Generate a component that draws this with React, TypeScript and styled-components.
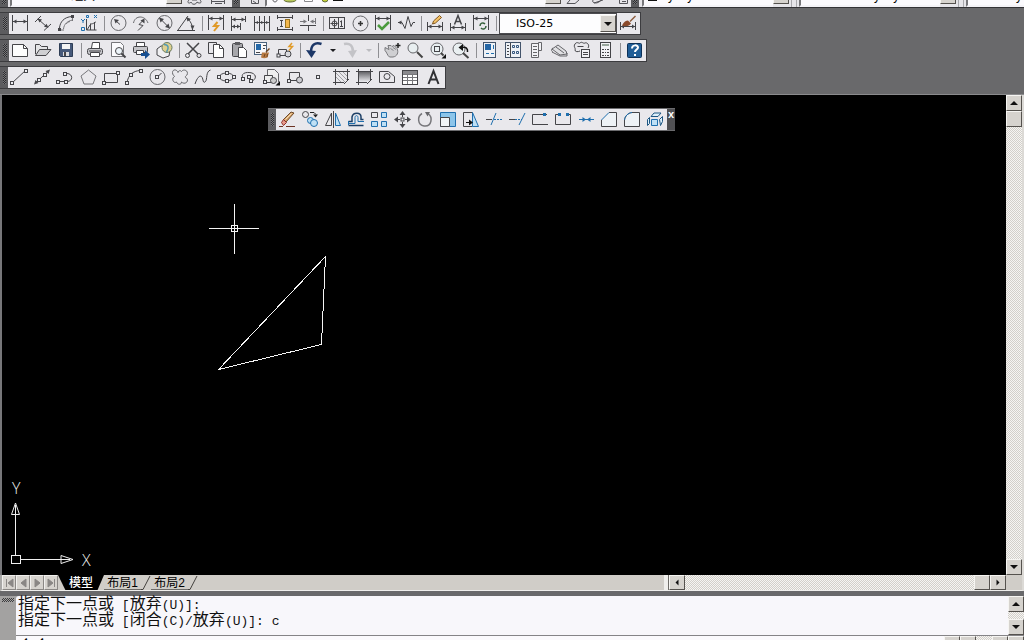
import React from 'react';
import styled, { createGlobalStyle, css } from 'styled-components';

const INK = '#454549';
const BLUE = '#1f6fae';
const PALE = '#bfe0f5';
const ORANGE = '#e09a28';
const UI_FONT = '"Liberation Sans", "Noto Sans CJK SC", sans-serif';

const GlobalStyle = createGlobalStyle`
  *, *::before, *::after { box-sizing: border-box; }
  html, body, #root { height: 100%; }
  body { margin: 0; background: #69696b; font-family: ${UI_FONT}; font-size: 12px; overflow: hidden; }
  button, input, select { font: inherit; color: inherit; margin: 0; padding: 0; }
`;

/* ---------- drawing icons ---------- */

type Art = React.ReactNode;
const F = (d: string, fill = INK) => <path d={d} fill={fill} stroke="none" />;
const P = (d: string, stroke = INK, fill = 'none', w = 1) => <path d={d} stroke={stroke} fill={fill} strokeWidth={w} />;
const D = (x: number, y: number, fill = '#eeeef2', stroke = INK) => (
  <rect x={x - 0.5} y={y - 0.5} width="3" height="3" fill={fill} stroke={stroke} />
);

const art: Record<string, Art> = {
  linear: <>{P('M3.500 2v16M18.500 2v16M4 8.500h14')}{F('M4 8.500l3.500-2v4zM18 8.500l-3.500-2v4z')}</>,
  aligned: <>{P('M3 9l6-6M12 17.500l7-6.500M6 6l9 8')}{F('M5.500 5.500l4.500 1-2.500 3zM16.500 14.800l-4.500-1 2.500-3z')}</>,
  arclen: <>{P('M4.500 15C5 9 9 4 17 3.500')}{P('M8.500 16c.5-5 4-8 9-9', '#77777b')}{P('M6 17h3M17.500 5v3', '#77777b')}{F('M3 15h3v3h-3zM16 2h3v3h-3z')}{P('M11 11c1-1 2-2 4-2.500', '#77777b')}</>,
  ordinate: <>{P('M8.500 6v11h10M9 17l3-5M12 11c4 0 5-2 6-2M16.500 9v8M12.500 11v6')}{P('M3 6l2 2 2-2M5 8v2M16 2l3 3M19 2l-3 3M3.500 14.500h3v3h-3zM8.500 2.500h2v2h-2z', BLUE)}</>,
  radius: <><circle cx="11.500" cy="10" r="7.500" stroke="#68686c" />{P('M13 11.500L9 8')}{F('M7 6l5 1-3.500 3.500z')}</>,
  jogged: <>{P('M3.500 10C5 2 15 2 18 10', '#68686c')}{P('M8 17.500l5-5-4-1 4-4')}{F('M14.500 5.500v5l-4-3z')}</>,
  diameter: <><circle cx="11.500" cy="10" r="7.500" stroke="#68686c" />{P('M7 5.500l9 9')}{F('M6 4.500l5 1.500-3.500 3.500zM17 15.500l-5-1.500 3.500-3.500z')}</>,
  angular: <>{P('M1 17.500h18M2 17L12 3M12 6c3 3 4.500 6 4.500 11')}{F('M10 4l5 2-3.500 2.500zM16.500 17l-2-4.500h4z')}</>,
  quick: <>{P('M3.500 2v15M18.500 2v15M4 5.500h14')}{F('M4 5.500l3.500-2v4zM18 5.500l-3.500-2v4z')}{P('M12.500 9l-3.500 4h4l-4 5', ORANGE, 'none', 2)}</>,
  baseline: <>{P('M3.500 3v15M18 6.500H4M12.500 10v7M4 13.500h8M17.500 3v6')}{F('M4 6.500l3.500-2v4zM17 6.500l-3.500-2v4zM4 13.500l3-2v4zM12 13.500l-3-2v4z')}</>,
  continued: <>{P('M3.500 3v15M8.500 3v15M13.500 3v15M18.500 3v15M4 9.500h14')}{F('M4 9.500l3-1.500v3zM13 9.500l-3-1.500v3zM18 9.500l-3-1.500v3z')}</>,
  dimspace: <>{P('M3.500 2v4M18.500 2v4M4 4.500h14M3.500 14v4M18.500 14v4M4 16.500h14M7.500 7v7M6 7.500h3M6 13.500h3')}<rect x="11.500" y="6.500" width="4" height="8" fill="#f3b74c" stroke="#9a7420" /></>,
  dimbreak: <>{P('M11.500 2v6M11.500 12v6M3 12.500h16')}{P('M3 8.500h6M14 8.500h5M18.500 5v6', '#77777b')}{F('M10 8.500l-3.500-2v4zM13 8.500l3.500-2v4z', '#77777b')}</>,
  tolerance: <><rect x="3.500" y="4.500" width="15" height="11" />{P('M12.500 5v10M4.500 10.500h7M8.500 6v9M15.500 8v5M14 9l2-1.500M14 13.500h3')}<circle cx="8.500" cy="10.500" r="2.500" /></>,
  centermark: <><circle cx="11.500" cy="10.500" r="7.500" stroke="#68686c" />{P('M9 10.500h5M11.500 8v5', '#333', 'none', 1.5)}</>,
  inspect: <>{P('M3.500 2v15M18.500 2v15M4 5.500h14')}{F('M4 5.500l3.500-2v4zM18 5.500l-3.500-2v4z')}{P('M6 12l4 4 7-7', '#4b9b3d', 'none', 2.5)}</>,
  jogline: <>{P('M3 9.500h4l3 6 3-12 3 10 2-4h2')}{F('M3 9.500l3.500-2v4z')}</>,
  dimedit: <>{P('M3.500 9v9M18.500 9v9M4 13.500h14')}{F('M4 13.500l3.500-2v4zM18 13.500l-3.500-2v4z')}{P('M8.500 11l1-3 6-5.500 2 2-6 5.500z', '#80551d', '#f5c265')}</>,
  dimtext: <>{P('M3.500 10v8M18.500 10v8M4 14.500h14')}{F('M4 14.500l3.500-2v4zM18 14.500l-3.500-2v4z')}{P('M7.500 11.500l3.500-9 3.500 9M9 8.500h4', INK, 'none', 1.5)}</>,
  dimupdate: <>{P('M3.500 2v15M18.500 2v15M4 5.500h14')}{F('M4 5.500l3.500-2v4zM18 5.500l-3.500-2v4z')}{P('M10 13c0-3 3-4 5-2M16 13c0 3-3 4-5 2', '#35603a', 'none', 1.5)}</>,
  dimstyle: <>{P('M3.500 9v8M18.500 9v8M4 13.500h14')}{F('M4 13.500l3-2v4zM18 13.500l-3-2v4z')}{F('M5 12.500c2-4 4-5 6-5l3 3c-2 3-5 3-9 2z', '#8b4a2b')}{P('M13 8.500l5.500-5.500', '#8b5a3c', 'none', 1.5)}</>,

  new: <>{P('M3.500 4.500h11l4 4v8h-15z', INK, '#fdfdfd')}{P('M14.500 4.500v4h4')}</>,
  open: <>{P('M3.500 14V4.500h4l2 2h6v3', INK, '#e4e4e6')}{P('M3.500 15.500l4-6h11.500l-5 6z', INK, '#cfcfd2')}</>,
  save: <>{P('M4.500 3.500h13v13h-12l-1-1z', '#2e3d55', '#46597a')}<rect x="7" y="4" width="8" height="5" fill="#f4f4f4" stroke="none" /><rect x="8" y="12" width="6" height="4" fill="#dcdce0" stroke="none" />{F('M9 12h2v4h-2z')}</>,
  print: <>{P('M7.500 8l1-5.500h7V8', INK, '#fff')}<rect x="3.500" y="8.500" width="15" height="6" rx="2" fill="#c6c6ca" />{P('M6.500 12.500h9v4h-9z', INK, '#fff')}{P('M5 11h12')}</>,
  preview: <>{P('M4.500 2.500h9l3 3v11h-12z', '#77777b', '#fbfbfd')}<circle cx="12" cy="11" r="3.500" fill="#eef5fa" stroke={INK} />{P('M14.500 13.500l4 4', INK, 'none', 2)}</>,
  publish: <>{P('M6.500 6V2.500h8V6', INK, '#fff')}<rect x="3.500" y="6.500" width="14" height="6" rx="1" fill="#c6c6ca" />{P('M6.500 10.500h7v4h-7z', INK, '#fff')}{F('M11 13h4v-3l5 4.500-5 4.500v-3h-4z', '#164f92')}</>,
  dwf: <>{P('M4 9l4-3h6l3 4-1 6-6 2-6-3z', INK, '#f0f0f2')}<circle cx="14" cy="7.500" r="5" fill="#ded08f" stroke="#6b7d63" />{P('M11 4.500c5 0 5 4 2.500 7.500', '#539bb3', 'none', 1.5)}</>,
  cut: <>{P('M5 3l11 11M17 3L6 14', INK, 'none', 1.5)}<circle cx="5.500" cy="15.500" r="2" /><circle cx="17" cy="15.500" r="2" /></>,
  copy: <>{P('M8 13.500H3.500v-11h8v2')}{P('M8.500 4.500h6l4 4v9h-10z', INK, '#fff')}{P('M14.500 4.500v4h4')}</>,
  paste: <><rect x="4.500" y="3.500" width="10" height="13" rx="1" fill="#a6a6aa" />{F('M7 2h5v3h-5z', '#5c5c60')}{P('M10.500 7.500h5l3 3v7h-8z', INK, '#fff')}</>,
  match: <><rect x="3.500" y="2.500" width="12" height="12" fill="#f8f8fa" stroke="#4b647f" /><rect x="5" y="4" width="5" height="6" fill="#2368a8" stroke="none" />{P('M12 5.500h3M12 8.500h2M5 12.500h4')}{F('M10 17.500l1-5h7l-1.500 5c-2 1-4.500 1-6.500 0z', '#b87b43')}{P('M13 17l1-3M16 17l.5-3', '#734720')}{P('M15 12l3.500-3.500', '#734720', 'none', 1.5)}</>,
  block: <>{P('M4.500 9.500h8v6h-8z')}<circle cx="14" cy="14" r="3" fill="#d9dadf" />{P('M18 3l-3 3.500h3.500l-3.500 4', ORANGE, 'none', 1.5)}{D(3.5, 14.5)}</>,
  undo: <>{P('M18.500 4C12 1.500 8 5 8 12', '#1c3767', 'none', 2.5)}{F('M3 10l10 1-4.500 7z', '#1c3767')}</>,
  redo: <>{P('M5 4c6-1.500 9 2 9 8', '#c3c3c7', 'none', 2.5)}{F('M18 10l-9 1 4.500 7z', '#c3c3c7')}</>,
  pan: <>{P('M4 7.500l4 2-1-4h3l1 1 2-1 3 3c2 4 0 8-4 8.500H8.500C6 15 6 12.500 4 10.500z', '#77777b', '#cfcfd2')}{P('M9.500 8.500l3 2M12 7.500l3 2', '#88888c')}{P('M14.500 5.500h5M17 3v5', '#222', 'none', 1.5)}</>,
  zoomrt: <><circle cx="9" cy="8" r="5" fill="#e9eff1" stroke="#66666a" />{P('M13 12l5.500 5.500', '#444', 'none', 2)}</>,
  zoomwin: <><circle cx="10" cy="9" r="6" fill="#e9eff1" stroke="#66666a" /><rect x="7.500" y="6.500" width="5" height="5" />{P('M14 13l2.500 2.500', '#444', 'none', 2)}{F('M19 14v4.500h-4.500z', '#111')}</>,
  zoomprev: <><circle cx="9" cy="9" r="6" fill="#e9eff1" stroke="#66666a" />{P('M13 13l5.500 5', '#444', 'none', 2)}{P('M12 7.500c4-1 6 1 5.500 4.500', '#111', 'none', 1.5)}{F('M8.500 7.500l4.500-3.500v7z', '#111')}</>,
  props: <><rect x="4.500" y="2.500" width="12" height="15" fill="#eef1f6" stroke="#44546b" /><rect x="6" y="4" width="6" height="6" fill="#2566a5" stroke="none" />{P('M7 13.500h3M12 13.500h3M14.500 5v4', BLUE)}</>,
  dcenter: <><rect x="3.500" y="2.500" width="15" height="15" fill="#eef1f6" stroke="#44546b" />{P('M8.500 3v14M5 5.500h2M5 8.500h2M5 11.500h2M5 14.500h2')}{P('M10.500 5.500h2v2h-2zM14.500 5.500h2v2h-2zM10.500 11.500h2v2h-2zM14.500 11.500h2v2h-2z', '#35567f')}</>,
  palettes: <>{P('M6.500 3.500h7v14h-7zM13.500 2.500h3v8h-3z', '#66666a', '#f2f2f5')}{P('M8 6.500h4M8 9.500h4M8 12.500h4M8 15.500h4', '#66666a')}</>,
  sheets: <>{P('M4 9l8 6 7-1-1-3-8-6z', '#66666a', '#e0e0e3')}{P('M4 12l8 4h7v-3M8 7l8 6M5 8c-2 1-2 3 0 4', '#66666a')}</>,
  markup: <>{P('M4 4c2-3 4 0 5-1 2-2 3 1 5 0s5 2 3 5M4 4c-2 3 1 4 0 6 0 2 3 2 5 1')}<rect x="10.500" y="9.500" width="8" height="8" fill="#f2f2f5" />{P('M12 12.500h5M12 14.500h5M6.500 6.500h6')}</>,
  calc: <><rect x="6.500" y="2.500" width="10" height="15" fill="#f2f2f5" /><rect x="8" y="4" width="7" height="2" fill="#98a69c" stroke="none" />{P('M8 9.500h7M8 12.500h7M8 15.500h7')}{P('M10.500 8v9M12.500 8v9', '#f2f2f5')}</>,
  help: <><rect x="4.500" y="3.500" width="14" height="14" rx="1" fill="#1f5d96" stroke="#0d3158" />{P('M9 8.500c0-4 6-4 6-1 0 2-3 2-3 4.500', '#fff', 'none', 2)}{F('M11 14h2v2h-2z', '#fff')}</>,

  line: <>{P('M4 16L18 3')}{D(3, 15)}{D(17, 3)}</>,
  xline: <>{P('M5 15.500L17.500 4')}{F('M3 17.500l1.500-4.500 3 3zM19 2.500l-1.500 4.500-3-3z')}{D(7, 12)}{D(13, 7)}</>,
  pline: <>{P('M4 14.500h9c6.500 0 6-8 0-8h-2')}{D(3, 14)}{D(11, 14)}{D(10, 6)}</>,
  polygon: <>{P('M11.500 3l7.500 6-3 8h-9l-3-8z', '#77777b')}</>,
  rect: <>{P('M4.500 6.500h13v9h-13z')}{D(3, 15)}{D(17, 5)}</>,
  arc: <>{P('M4 16C5 8 10 4 17 3.500')}{D(3, 15)}{D(7, 7)}{D(17, 3)}</>,
  circle: <><circle cx="11.500" cy="10" r="7.500" stroke="#68686c" />{P('M11.500 10l4-4')}{D(10, 9)}</>,
  cloud: <>{P('M9 5.500c-1-3.500-5.500-3.500-5.500 0 0 2.500 1.500 3 2 4-3.500 2-1 7.500 2 5.500 1 3 5 3 5 0 3 3 7.500 0 5.500-3.500-2.500-1-2-2 0-3.500 2-4.500-3.500-6.500-5.500-3.500-1-1.500-3-1-3.500 1z', '#68686c')}</>,
  spline: <>{P('M3 17c2-6 4.500-9 6.500-7.500s1 8 4 5c2-2 0-10 5-11.500')}</>,
  ellipse: <><ellipse cx="11.500" cy="10" rx="7" ry="4" />{D(3, 9)}{D(18, 9)}{D(11, 5)}{D(11, 13)}</>,
  earc: <>{P('M5 11C2 6 9 4.500 14 6c5 2 4 6.500 0 8')}{D(4, 11)}{D(10, 9)}{D(12, 13)}</>,
  insert: <>{P('M6.500 9V2.500h7l4 4V15', '#66666a', '#eee')}{P('M3.500 8.500h8v7h-8z', INK, '#eee')}<circle cx="12.500" cy="13.500" r="3" fill="#ccc" />{F('M19 14v4.500h-4.500z', '#111')}{D(3, 14)}</>,
  mkblock: <>{P('M5.500 5.500h10v8h-10z')}<circle cx="15.500" cy="13" r="3" fill="#cfcfd4" />{D(4, 13)}</>,
  point: D(10, 9),
  hatch: <>{P('M5.500 2v16M17.500 2v12M3 4.500h17M3 15.500h11')}{P('M6 6l9 9M6 10l5 5M9 5l8 8M13 5l4 4', '#a0a0a4')}{P('M14 17l5-5')}</>,
  gradient: <><rect x="6" y="5" width="11" height="10" fill="url(#shade)" stroke="none" />{P('M5.500 2v16M17.500 2v12M3 4.500h17M3 15.500h11M14 17l5-5')}</>,
  region: <>{P('M3.500 4.500h9l6 5v6h-15z')}<circle cx="11" cy="9.500" r="3" /></>,
  table: <><rect x="3.500" y="3.500" width="15" height="14" fill="#fff" />{F('M4 4h14v3H4z', '#8a8a8e')}{P('M4 7.500h14M4 10.500h14M4 13.500h14M8.500 7v10M13.500 7v10', '#77777b')}</>,
  mtext: <>{P('M6.500 17l5-13 5 13M8.500 12.500h6', '#303034', 'none', 2)}</>,

  erase: <>{P('M3 17.500h4M10 17.500h9', '#6c3425')}{P('M7 11l8-8 3 1-8 9z', '#6e4a2b', '#d9a56c')}{P('M5.500 13.500l2-3 3 3-3 3z', '#8c322c', '#e89a8b')}{P('M9.500 10.500l6-6', '#f6e0b8')}</>,
  mcopy: <><circle cx="6.500" cy="5.500" r="3" />{P('M11 3.500h4l2 2', '#222')}{F('M14 5.500h5l-2.500 3z', '#222')}<circle cx="11.500" cy="11.500" r="3" fill={PALE} stroke={BLUE} /><circle cx="15" cy="14" r="3.500" fill={PALE} stroke={BLUE} /></>,
  mirror: <>{P('M9.500 4v12.500h-6zM11.500 2v17')}{P('M13.500 4v12.500h5z', BLUE, PALE)}</>,
  offset: <>{P('M3.500 16.500h15M3.500 12.500h3.500V8c1-5 9-5 9 0v2.500h2.500', '#1d3f66', 'none', 1.5)}{P('M3.500 12v4M4 14.500h6V8.500c0-2.500 3-2.500 3 0v4h6', BLUE)}</>,
  array: <>{P('M3.500 3.500h6v5h-6z')}{P('M13.500 3.500h5v5h-5zM3.500 12.500h6v5h-6zM13.500 12.500h5v5h-5z', BLUE, PALE)}</>,
  move: <>{P('M11.500 4v4M11.500 13v4M5 10.500h4M14 10.500h4')}{F('M11.500 2l3 4h-6zM11.500 19l3-4h-6zM3 10.500l4-3v6zM20 10.500l-4-3v6z')}{D(10.5, 9.5)}</>,
  rotate: <>{P('M8 4.500c-5 3-4.500 11.500 2 12.500 8 1 9-9 4-12.500', '#77777b', 'none', 1.5)}{F('M11 3l5 0-2.500 4.500z', '#66666a')}</>,
  scale: <>{P('M3.500 3.500h15v14h-15z', BLUE, '#8cc5ea')}{P('M3.500 8.500h9v9h-9z', INK, '#f1f4f6')}</>,
  stretch: <>{P('M12.500 3.500h-9v14h9')}{P('M12.500 3.500l6 14h-6z', BLUE, PALE)}{P('M6 13.500h5', '#111')}{F('M13 13.500l-4-3v6z', '#111')}</>,
  trim: <>{P('M3 10.500h6')}{P('M8 16l5-12', BLUE)}<path d="M11 10.500h8" stroke={BLUE} strokeDasharray="2 1" /></>,
  extend: <>{P('M3 10.500h6')}{P('M13 16l6-12', BLUE)}<path d="M9 10.500h7" stroke={BLUE} strokeDasharray="2 1" /></>,
  breakpt: <>{P('M18 5.500H3.500v10H19')}{F('M14 4h3v3h-3z', BLUE)}</>,
  break: <>{P('M8 5.500H3.500v10h15v-10H15')}{F('M6 4h3v3h-3zM14 4h3v3h-3z', BLUE)}</>,
  join: <>{P('M4 10.500h15', BLUE)}{F('M11 10.500l-3.500-2.500v5zM12 10.500l3.500-2.500v5z', BLUE)}</>,
  chamfer: <>{P('M11 3.500h7.500v14h-15V11', INK, '#eef2f6')}{P('M3.500 11l7.500-7.500', BLUE)}</>,
  fillet: <>{P('M11 3.500h7.500v14h-15V11C4 7 7 4 11 3.500', INK, '#eef2f6')}{P('M3.500 11c.5-4 3.500-7 7.500-7.500', BLUE)}</>,
  explode: <>{P('M7.500 10.500h6v6h-6z', BLUE, PALE)}{P('M7 7.500l3-3.500h7l-3 3.500zM15.500 10.500l3-3v5l-2 4zM3.500 10.500l2-2v6l-2 2z', '#1d5682', '#dff0fa')}</>,
};

const Icon = ({ name }: { name: string }) => (
  <svg width="23" height="21" viewBox="0 0 23 21" fill="none" stroke={INK} aria-hidden="true">
    {name === 'gradient' && (
      <defs><linearGradient id="shade" x2="0" y2="1"><stop stopColor="#66666a" /><stop offset="1" stopColor="#ececf0" /></linearGradient></defs>
    )}
    {art[name]}
  </svg>
);

/* ---------- shared parts ---------- */

const raised = css`
  background: #d6d3ce;
  border: 1px solid;
  border-color: #f6f5f2 #55524e #55524e #f6f5f2;
`;
const dither = css`
  background: repeating-conic-gradient(#d3d0ca 0 25%, #f6f5f3 0 50%) 0 0 / 2px 2px;
`;

const Page = styled.div`
  height: 100vh;
  display: flex;
  flex-direction: column;
  overflow: hidden;
  background: #69696b;
`;

const Grip = styled.span`
  width: 9px;
  flex: none;
  align-self: stretch;
  padding: 4px 2px 4px 3px;
  background: repeating-conic-gradient(#2c2c2f 0 25%, #77777a 0 50%) 0 0 / 2px 2px content-box, #5c5c5f;
`;
const NarrowGrip = styled(Grip)`
  width: 8px;
`;

const Bar = styled.div`
  width: max-content;
  height: 23px;
  display: flex;
  align-items: stretch;
  background: #e9e8ec;
  border: 1px solid #3c3c3f;
  border-left: 0;
`;

const ToolButton = styled.button`
  width: 23px;
  height: 21px;
  display: block;
  border: 0;
  background: transparent;
  svg { display: block; }
`;

const Divider = styled.span`
  width: 6px;
  display: flex;
  justify-content: center;
  padding: 3px 0;
  &::before { content: ''; width: 1px; background: #8f8f93; }
`;

const ArrowButton = styled.button<{ $faded?: boolean }>`
  width: 13px;
  border: 0;
  background: transparent;
  display: grid;
  place-items: center;
  &::before {
    content: '';
    border: 3px solid transparent;
    border-bottom: 0;
    border-top-color: ${(p) => (p.$faded ? '#bcbcc0' : '#1d1d20')};
  }
`;

const Dock = styled.div`
  flex: none;
  padding: 4px 0 5px;
  display: flex;
  flex-direction: column;
  gap: 4px;
  border-bottom: 1px solid #8b8b8d;
`;

const StyleBox = styled.label`
  width: 118px;
  display: flex;
  align-items: center;
  position: relative;
  border: 1px solid #4c4c50;
  background: #fdfdfe;
`;
const StyleSelect = styled.select`
  appearance: none;
  width: 100%;
  height: 19px;
  padding-left: 16px;
  border: 0;
  background: transparent;
  font-family: "DejaVu Sans", sans-serif;
  font-size: 11px;
`;
const DropMark = styled.span`
  ${raised}
  position: absolute;
  right: 0;
  width: 16px;
  height: 17px;
  display: grid;
  place-items: center;
  pointer-events: none;
  &::before { content: ''; border: 4px solid transparent; border-bottom: 0; border-top-color: #111; }
`;

function Tools({ items }: { items: string[] }) {
  return (
    <>
      {items.map((n, i) => {
        if (n === '|') return <Divider key={i} />;
        if (n === 'v') return <ArrowButton key={i} aria-label="history" />;
        if (n === 'w') return <ArrowButton key={i} aria-label="history" $faded />;
        return <ToolButton key={i} aria-label={n}><Icon name={n} /></ToolButton>;
      })}
    </>
  );
}

/* ---------- top strip ---------- */

const Strip = styled.div`
  flex: none;
  height: 8px;
  display: flex;
  align-items: flex-end;
  overflow: hidden;
  background: #e6e5e9;
  border-bottom: 1px solid #333336;
`;
const Field = styled.div<{ $w?: number; $pad?: number }>`
  ${(p) => (p.$w ? `width: ${p.$w}px; flex: none;` : 'flex: 1;')}
  height: 22px;
  display: flex;
  align-items: flex-end;
  gap: 3px;
  padding: 0 0 1px ${(p) => p.$pad ?? 4}px;
  line-height: 16px;
  white-space: nowrap;
  background: #fbfafd;
  border-left: 2px solid #77777a;
  border-bottom: 2px solid #f4f3f7;
`;
const DropKnob = styled.button`
  ${raised}
  flex: none;
  width: 16px;
  height: 20px;
  align-self: flex-end;
  margin-bottom: 3px;
`;
const Swatch = styled.span`
  width: 9px;
  height: 9px;
  margin-bottom: 3px;
  background: #111;
`;
const Ruling = styled.span`
  width: 6px;
  height: 20px;
  flex: none;
  border: solid #a9a9ad;
  border-width: 0 1px;
  margin: 0 2px;
`;
const Gap = styled.span<{ $w: number }>`
  flex: none;
  width: ${(p) => p.$w}px;
`;
const StripGrip = styled(NarrowGrip)`
  padding: 0 2px 3px;
`;
const StripSvg = styled.svg`
  flex: none;
`;

const glyphs: Record<string, string> = {
  gear: 'M7 0c-3 3 1 4 2 2 1 3 5 3 6 0 2 2 6 1 3-2M10 0h5',
  workspace: 'M4.500 0v4M17.500 0v4M5 1.500h12M8 3.500h7',
  layers: 'M11.500 0v3.500h7V0M13 1l3 2',
  current: 'M6 3.500h8L18 0M6 3.500L9 0',
  previous: 'M7 0c-2 4 6 4 8 0M8 3l9-3',
  states: 'M8.500 0v3.500h8V0M11 1.500h4',
};
const StripGlyph = ({ kind, w = 25 }: { kind: string; w?: number }) => (
  <StripSvg width={w} height="7" viewBox={`0 0 ${w} 7`} fill="none" stroke="#55555a" aria-hidden="true">
    <path d={glyphs[kind]} />
  </StripSvg>
);

const LayerGlyphs = () => (
  <StripSvg width="80" height="4" viewBox="0 0 80 4" aria-hidden="true">
    <path d="M2 0c0 2.500 4 2.500 4 0" fill="none" stroke="#55555a" />
    <ellipse cx="19" cy="0" rx="6" ry="2" fill="#b9c95c" stroke="#68703c" />
    <path d="M33.500 0v1.500h8V0" fill="#fff" stroke="#8a8a8e" />
    <circle cx="54" cy="-1" r="3" fill="#c2cf34" stroke="#68703c" />
    <rect x="62" y="0" width="10" height="1" fill="#111" />
  </StripSvg>
);

/* ---------- drawing area ---------- */

const Stage = styled.main`
  flex: 1;
  min-height: 0;
  display: flex;
  border-left: 2px solid #77777a;
  border-right: 2px solid #dcdad6;
`;
const Canvas = styled.section`
  flex: 1;
  min-width: 0;
  position: relative;
  overflow: hidden;
  background: #000;
`;
const Sketch = styled.svg`
  position: absolute;
  left: 0;
  top: 0;
`;
const Axes = styled.svg`
  position: absolute;
  left: 0;
  bottom: 0;
  font-family: "Open Sans", "Liberation Sans", sans-serif;
  font-weight: 300;
  font-size: 16px;
`;
const Floating = styled.div`
  position: absolute;
  left: 266px;
  top: 13px;
  height: 23px;
  display: flex;
  align-items: stretch;
  background: #e9e8ec;
  border: solid #6b6b6e;
  border-width: 1px 0;
`;
const FloatClose = styled.button`
  width: 8px;
  border: 0;
  background: #505053;
  color: #fff;
  font-size: 11px;
  font-weight: bold;
  line-height: 11px;
  display: flex;
  align-items: flex-start;
  justify-content: center;
`;

const Scroll = styled.div<{ $h?: boolean }>`
  display: flex;
  flex-direction: ${(p) => (p.$h ? 'row' : 'column')};
  ${(p) => (p.$h ? 'height: 15px;' : 'width: 16px;')}
  flex: none;
  ${dither}
`;
const rot: Record<string, number> = { up: 0, right: 90, down: 180, left: 270 };
const Knob = styled.button<{ $dir?: string; $small?: boolean }>`
  ${raised}
  flex: none;
  width: 16px;
  height: ${(p) => (p.$small ? 15 : 16)}px;
  display: grid;
  place-items: center;
  ${(p) => p.$dir && css`
    &::before {
      content: '';
      border: ${p.$small ? 3 : 4}px solid transparent;
      border-top: 0;
      border-bottom-color: #111;
      transform: rotate(${rot[p.$dir]}deg);
    }
  `}
`;
const Track = styled.span`
  flex: 1;
`;

/* ---------- layout tabs ---------- */

const TabRow = styled.div`
  flex: none;
  height: 16px;
  display: flex;
  background: #d0cdc8;
  border-left: 2px solid #a9a8a6;
  border-right: 2px solid #dcdad6;
  border-bottom: 1px solid #efeeec;
`;
const TabNav = styled.button`
  width: 14px;
  height: 15px;
  border: 1px solid #f1f0ee;
  border-right-color: #8b8885;
  border-bottom-color: #8b8885;
  background: #d6d3ce;
  svg { display: block; }
`;
const ActiveTab = styled.button`
  width: 46px;
  border: 0;
  background: #000;
  color: #fff;
  font-weight: 500;
  font-size: 12px;
  line-height: 16px;
  clip-path: polygon(0 0, 100% 0, 86% 100%, 16% 100%);
`;
const Tab = styled.button`
  width: 37px;
  border: 0;
  border-bottom: 1px solid #6d6b68;
  background: transparent;
  font-size: 12px;
  line-height: 16px;
  white-space: nowrap;
`;
const Slash = () => (
  <svg width="10" height="15" viewBox="0 0 10 15" aria-hidden="true"><path d="M0 14.500h2L9 1" fill="none" stroke="#44423f" /></svg>
);
const Splitter = styled.span`
  width: 5px;
  border-right: 1px solid #6d6b68;
  background: #efeeec;
`;
const HScroll = styled(Scroll)`
  flex: 0 1 337px;
`;

/* ---------- command window ---------- */

const Command = styled.section`
  flex: none;
  height: 49px;
  border-top: 5px solid #69696b;
  display: flex;
  background: #a3a2a1;
`;
const CommandGrip = styled.span`
  width: 16px;
  padding: 2px 2px 0;
  &::before {
    content: '';
    display: block;
    height: 4px;
    background: repeating-conic-gradient(#3c3c3e 0 25%, #a3a2a1 0 50%) 0 0 / 2px 2px;
  }
`;
const CommandBody = styled.div`
  flex: 1;
  min-width: 0;
  display: flex;
  flex-direction: column;
  background: #f8f7fb;
  border-top-left-radius: 3px;
`;
const HistoryRow = styled.div`
  flex: none;
  height: 39px;
  display: flex;
`;
const History = styled.div`
  flex: 1;
  padding-left: 2px;
  color: #111;
`;
const HistoryLine = styled.p`
  margin: 0;
  height: 16px;
  line-height: 12px;
  font-family: "Noto Sans CJK SC", sans-serif;
  font-size: 16px;
  white-space: pre;
`;
const Mono = styled.span`
  font-family: "Liberation Mono", monospace;
  font-size: 13px;
`;
const PromptRow = styled.div`
  flex: none;
  height: 5px;
  overflow: hidden;
  display: flex;
  border-top: 1px solid #858487;
  background: #fbfafd;
`;
const PromptLabel = styled.label`
  padding-left: 2px;
  font-size: 16px;
  line-height: 18px;
  font-family: "Noto Sans CJK SC", sans-serif;
`;
const PromptInput = styled.input`
  flex: 1;
  border: 0;
  background: transparent;
  outline: 0;
`;

const mixed = (s: string) => s.split(/([\x20-\x7e]+)/).map((t, i) => (i % 2 ? <Mono key={i}>{t}</Mono> : t));

export default function App() {
  return (
    <Page>
      <GlobalStyle />
      <Strip>
        <StripGrip />
        <Gap $w={2} />
        <Field $w={156} $pad={6}>AutoCAD 经典</Field>
        <DropKnob aria-label="workspace" />
        <StripGlyph kind="gear" />
        <StripGlyph kind="workspace" />
        <StripGrip />
        <StripGlyph kind="layers" />
        <Field $w={280}><LayerGlyphs /></Field>
        <DropKnob aria-label="layer" />
        <StripGlyph kind="current" />
        <StripGlyph kind="previous" />
        <StripGlyph kind="states" w={20} />
        <StripGrip />
        <Gap $w={3} />
        <Field $w={131}><Swatch />ByLayer</Field>
        <DropKnob aria-label="colour" />
        <Ruling />
        <Field $w={141}><Gap $w={58} />ByLayer</Field>
        <DropKnob aria-label="linetype" />
        <Ruling />
        <Field><Gap $w={33} />ByLayer</Field>
      </Strip>

      <Dock>
        <Bar>
          <Grip />
          <Tools items={['linear', 'aligned', 'arclen', 'ordinate', '|', 'radius', 'jogged', 'diameter', 'angular', '|', 'quick', 'baseline', 'continued', 'dimspace', 'dimbreak', '|', 'tolerance', 'centermark', 'inspect', 'jogline', '|', 'dimedit', 'dimtext', 'dimupdate', '|']} />
          <StyleBox>
            <StyleSelect aria-label="dimension style" defaultValue="ISO-25"><option>ISO-25</option></StyleSelect>
            <DropMark />
          </StyleBox>
          <Tools items={['dimstyle']} />
        </Bar>
        <Bar>
          <Grip />
          <Tools items={['new', 'open', 'save', '|', 'print', 'preview', 'publish', 'dwf', '|', 'cut', 'copy', 'paste', 'match', 'block', '|', 'undo', 'v', 'redo', 'w', '|', 'pan', 'zoomrt', 'zoomwin', 'zoomprev', '|', 'props', 'dcenter', 'palettes', 'sheets', 'markup', 'calc', '|', 'help']} />
        </Bar>
        <Bar>
          <NarrowGrip />
          <Tools items={['line', 'xline', 'pline', 'polygon', 'rect', 'arc', 'circle', 'cloud', 'spline', 'ellipse', 'earc', 'insert', 'mkblock', 'point', 'hatch', 'gradient', 'region', 'table', 'mtext']} />
        </Bar>
      </Dock>

      <Stage>
        <Canvas>
          <Sketch width="400" height="300" viewBox="0 0 400 300" fill="none" stroke="#f4f4f4" shapeRendering="crispEdges">
            <path d="M323.500 161.500L216.500 274.500L319.500 249.500Z" />
            <path d="M207 133.500h50M232.500 109v50M229.500 130.500h6v6h-6z" />
          </Sketch>
          <Axes width="100" height="100" viewBox="0 0 100 100" fill="none" stroke="#f0f0f0">
            <path d="M9.500 80.500h9v8h-9zM13.500 80V40M19 84.500h40" shapeRendering="crispEdges" />
            <path d="M13.500 28l-4 11.500h8zM13.500 30v9M71 84.500l-12-4v8zM59 84.500h9" />
            <text x="10" y="19" fill="#f0f0f0" stroke="none">Y</text>
            <text x="80" y="91" fill="#f0f0f0" stroke="none">X</text>
          </Axes>
          <Floating>
            <NarrowGrip />
            <Tools items={['erase', 'mcopy', 'mirror', 'offset', 'array', 'move', 'rotate', 'scale', 'stretch', 'trim', 'extend', 'breakpt', 'break', 'join', 'chamfer', 'fillet', 'explode']} />
            <FloatClose aria-label="close">x</FloatClose>
          </Floating>
        </Canvas>
        <Scroll>
          <Knob $dir="up" aria-label="scroll up" />
          <Knob aria-label="scroll thumb" />
          <Track />
          <Knob $dir="down" aria-label="scroll down" />
        </Scroll>
      </Stage>

      <TabRow>
        {['M3.500 2v8M10 2v8L5 6z', 'M9 2v8L4 6z', 'M4 2v8l5-4z', 'M9.500 2v8M3 2v8l5-4z'].map((d, i) => (
          <TabNav key={i} aria-label="tab navigation">
            <svg width="12" height="12" viewBox="0 0 12 12" fill="#8a8785" stroke="#8a8785" strokeWidth="1"><path d={d} /></svg>
          </TabNav>
        ))}
        <ActiveTab>模型</ActiveTab>
        <Tab>布局1</Tab>
        <Slash />
        <Tab>布局2</Tab>
        <Slash />
        <Track />
        <Splitter />
        <HScroll $h>
          <Knob $small $dir="left" aria-label="scroll left" />
          <Track />
          <Knob $small aria-label="scroll thumb" />
          <Knob $small $dir="right" aria-label="scroll right" />
        </HScroll>
        <Gap $w={16} />
      </TabRow>

      <Command>
        <CommandGrip />
        <CommandBody>
          <HistoryRow>
            <History>
              <HistoryLine>{mixed('指定下一点或 [放弃(U)]:')}</HistoryLine>
              <HistoryLine>{mixed('指定下一点或 [闭合(C)/放弃(U)]: c')}</HistoryLine>
            </History>
            <Scroll>
              <Knob $dir="up" aria-label="history up" />
              <Track />
              <Knob $dir="down" aria-label="history down" />
            </Scroll>
          </HistoryRow>
          <PromptRow>
            <PromptLabel htmlFor="prompt">命令:</PromptLabel>
            <PromptInput id="prompt" />
            <Knob aria-label="prompt left" />
            <Knob aria-label="prompt thumb" />
            <Scroll />
            <Knob aria-label="prompt right" />
            <Knob aria-label="prompt down" />
          </PromptRow>
        </CommandBody>
      </Command>
    </Page>
  );
}
